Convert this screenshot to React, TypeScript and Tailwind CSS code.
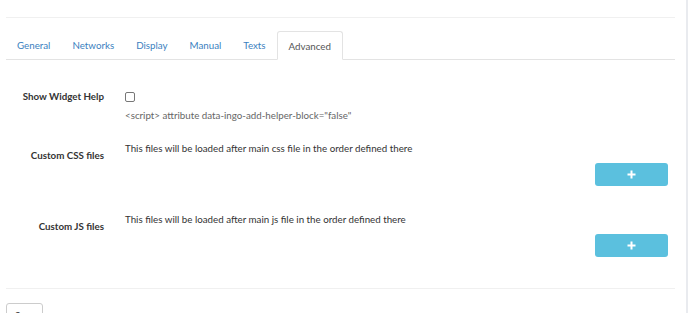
import React from "react";

const tabs = ["General", "Networks", "Display", "Manual", "Texts", "Advanced"];

function AddButton() {
  return (
    <div className="flex justify-end pr-[7px]">
      <button className="flex h-[23px] w-[73px] items-center justify-center rounded-[3px] bg-[#5bc0de] text-white">
        <svg width="9" height="9" viewBox="0 0 9 9">
          <path d="M4.5 0.5v8M0.5 4.5h8" stroke="white" strokeWidth="2" />
        </svg>
      </button>
    </div>
  );
}

export default function App() {
  return (
    <div
      className="flex h-[313px] w-full overflow-hidden bg-white text-[9.75px] leading-[14px] text-[#333]"
      style={{ fontFamily: "Lato, 'Open Sans', sans-serif" }}
    >
      <div className="flex-1 pl-[6px] pr-[11px] pt-[17px]">
        <div className="border-t border-[#f0f0f0] pt-[13px]">
          <ul className="flex border-b border-[#e3e3e3]">
            {tabs.map((t) => {
              const active = t === "Advanced";
              return (
                <li
                  key={t}
                  className={
                    active
                      ? "-mb-px flex h-[29px] items-center rounded-t-[3px] border border-b-white border-[#e3e3e3] bg-white px-[11px] text-[#555]"
                      : "flex h-[28px] items-center px-[11px] text-[#3b7fc0]"
                  }
                >
                  {t}
                </li>
              );
            })}
          </ul>

          <div className="mt-[29px] flex">
            <div className="w-[98px] text-right font-bold">Show Widget Help</div>
            <div className="ml-[21px] flex-1">
              <div className="mt-[3px] h-[10px] w-[10px] rounded-[2px] border border-[#777]" />
              <div className="mt-[6px] text-[#666]">
                &lt;script&gt; attribute data-ingo-add-helper-block="false"
              </div>
            </div>
          </div>

          <div className="mt-[19px] flex">
            <div className="w-[98px] pt-[7px] text-right font-bold">Custom CSS files</div>
            <div className="ml-[21px] flex-1">
              <div>This files will be loaded after main css file in the order defined there</div>
              <div className="mt-[8px]">
                <AddButton />
              </div>
            </div>
          </div>

          <div className="mt-[26px] flex">
            <div className="w-[98px] pt-[7px] text-right font-bold">Custom JS files</div>
            <div className="ml-[21px] flex-1">
              <div>This files will be loaded after main js file in the order defined there</div>
              <div className="mt-[8px]">
                <AddButton />
              </div>
            </div>
          </div>

          <div className="mt-[31px] border-t border-[#f0f0f0] pt-[14px]">
            <div className="h-[26px] w-[37px] rounded-[3px] border border-[#ccc] bg-white px-[8px] pt-[4px] text-[#333]">
              Save
            </div>
          </div>
        </div>
      </div>
      <div className="w-[2px] bg-[#e9ebef]" />
    </div>
  );
}
